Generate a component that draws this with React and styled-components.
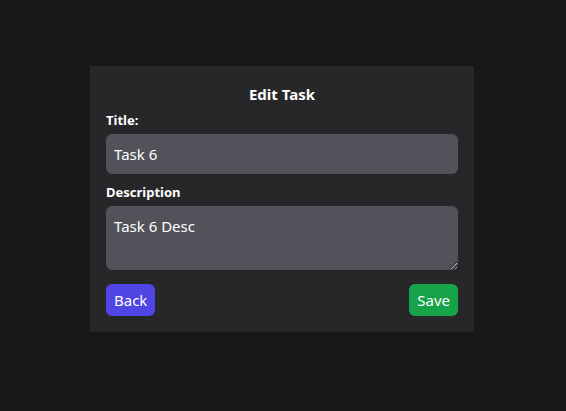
import React, { useState } from "react";
import styled, { createGlobalStyle } from "styled-components";

const Global = createGlobalStyle`
  html, body { margin: 0; padding: 0; background: #18181b; }
  body { font-family: "Noto Sans", "Open Sans", sans-serif; color: #fff; }
  * { box-sizing: border-box; }
`;

const Page = styled.div`
  min-height: 411px;
  display: flex;
  justify-content: center;
  align-items: flex-start;
  padding-top: 66px;
  padding-right: 2px;
`;

const Card = styled.form`
  width: 384px;
  background: #27272a;
  padding: 16px;
  display: flex;
  flex-direction: column;
`;

const Heading = styled.h2`
  margin: 0 0 4px;
  font-size: 15px;
  line-height: 24px;
  font-weight: 700;
  text-align: center;
`;

const Label = styled.label`
  font-size: 13px;
  line-height: 20px;
  font-weight: 700;
  margin-bottom: 4px;
`;

const fieldCss = `
  width: 100%;
  background: #52525b;
  color: #fff;
  border: none;
  border-radius: 6px;
  padding: 8px;
  font-family: "Noto Sans", "Open Sans", sans-serif;
  font-size: 15px;
  line-height: 24px;
  outline: none;
  display: block;
`;

const Input = styled.input`
  ${fieldCss}
  height: 40px;
  margin-bottom: 8px;
`;

const TextArea = styled.textarea`
  ${fieldCss}
  height: 64px;
  margin-bottom: 14px;
  resize: vertical;
`;

const Actions = styled.div`
  display: flex;
  justify-content: space-between;
`;

const Button = styled.button`
  height: 32px;
  padding: 0 8px;
  border: none;
  border-radius: 6px;
  background: ${(p) => p.$bg};
  color: #fff;
  font-family: "Noto Sans", "Open Sans", sans-serif;
  font-size: 15px;
  line-height: 32px;
  cursor: pointer;
`;

export default function App() {
  const [title, setTitle] = useState("Task 6");
  const [desc, setDesc] = useState("Task 6 Desc");
  return (
    <>
      <Global />
      <Page>
        <Card onSubmit={(e) => e.preventDefault()}>
          <Heading>Edit Task</Heading>
          <Label>Title:</Label>
          <Input value={title} onChange={(e) => setTitle(e.target.value)} />
          <Label>Description</Label>
          <TextArea value={desc} onChange={(e) => setDesc(e.target.value)} />
          <Actions>
            <Button type="button" $bg="#4f46e5">Back</Button>
            <Button type="submit" $bg="#16a34a">Save</Button>
          </Actions>
        </Card>
      </Page>
    </>
  );
}
